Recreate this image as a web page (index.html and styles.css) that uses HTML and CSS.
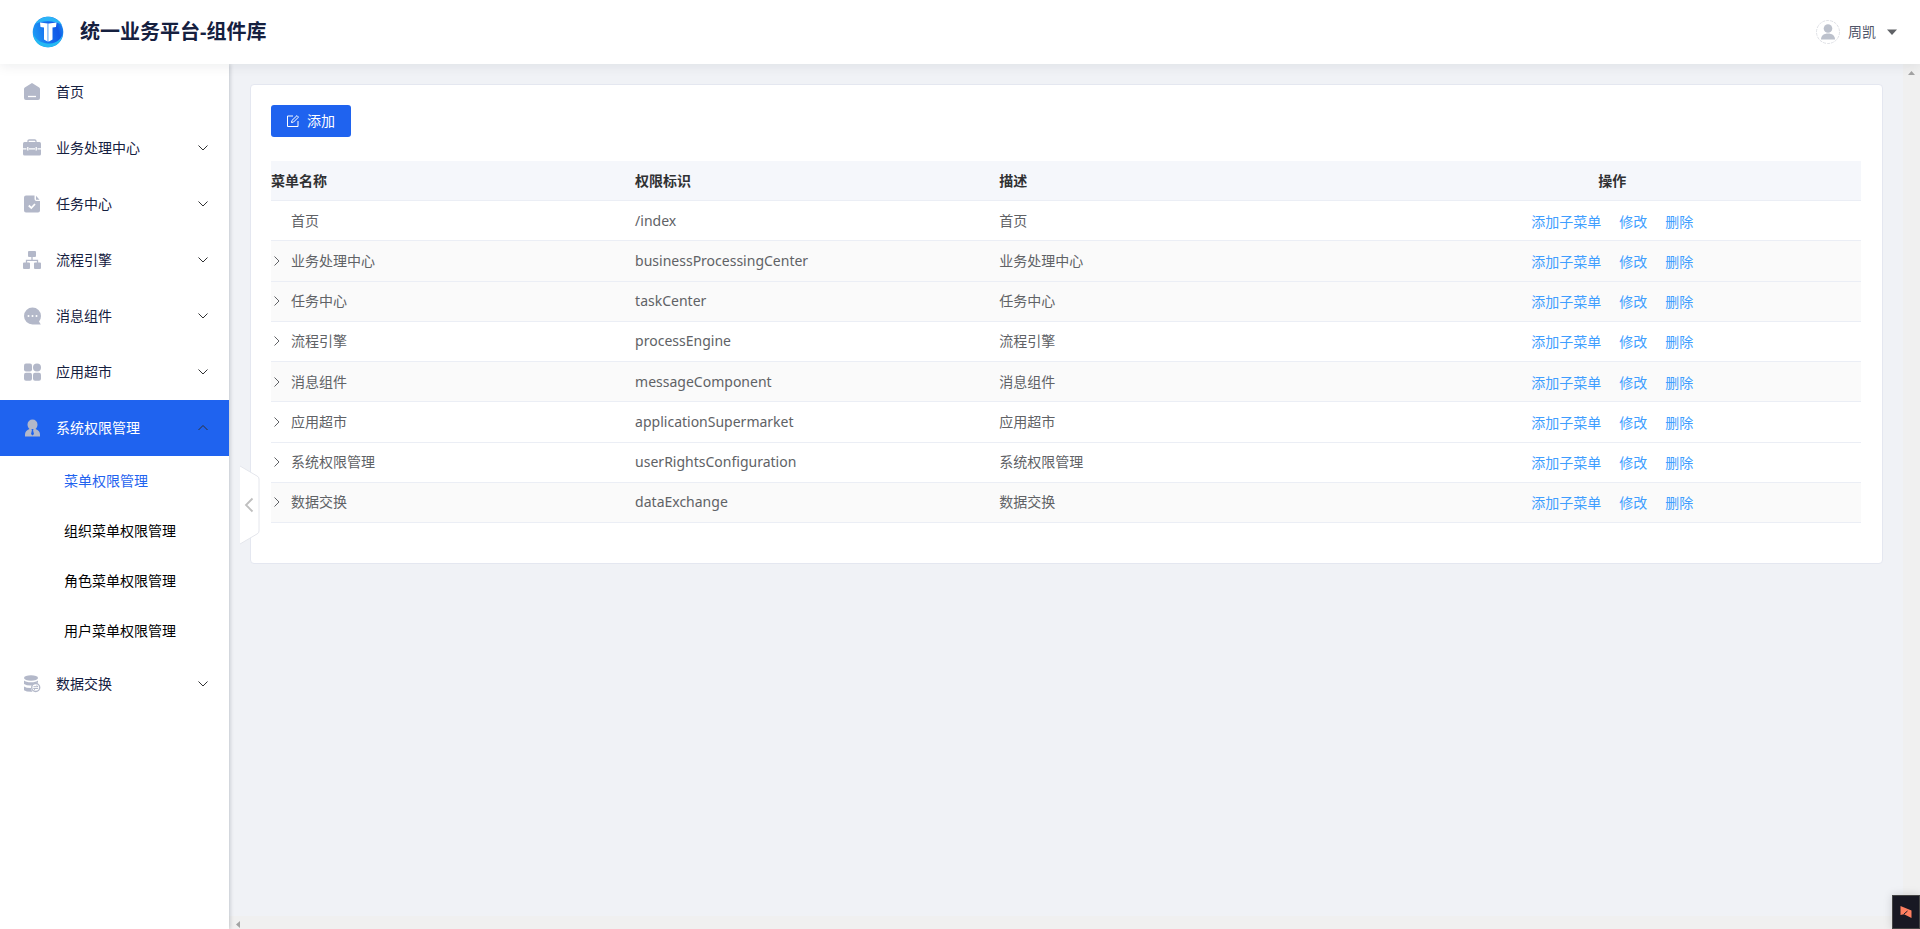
FILE: index.html
```html
<!DOCTYPE html>
<html lang="zh-CN">
<head>
<meta charset="utf-8">
<title>统一业务平台-组件库</title>
<link rel="stylesheet" href="styles.css">
</head>
<body>
<div class="app">
  <header class="topbar">
    <div class="brand">
      <svg class="logo" viewBox="0 0 32 32" aria-hidden="true">
        <defs>
          <linearGradient id="logoFill" x1="0" y1="0.6" x2="1" y2="0.3">
            <stop offset="0" stop-color="#1f9cf5"/>
            <stop offset="0.4" stop-color="#1673f0"/>
            <stop offset="0.8" stop-color="#1257e6"/>
            <stop offset="1" stop-color="#1a8cf2"/>
          </linearGradient>
        </defs>
        <circle cx="16" cy="16" r="15.3" fill="url(#logoFill)"/>
        <path d="M3 8C7 1.500 14 0 20 1.200 25 2.500 28 5 30 9 22 4.500 12 4 3 8z" fill="#2bb4f6"/>
        <path d="M1 18C5 25 10 27.500 18 27.500C25 27 29.500 23 31 17C30.500 26 24 31.300 16 31.300S2 26 1 18z" fill="#25b9f2"/>
        <path d="M8 6.500l7.500 1V25.500L12 23.500V11.500l-3.500-.500z" fill="#fff"/>
        <path d="M24.500 6.500l-7.500 1V25.500l3.500-2V11.500l3.500-.500z" fill="#fff"/>
        <path d="M15.500 7.500H17v18h-1.500z" fill="#b4d8fb"/>
      </svg>
      <h1 class="title">统一业务平台-组件库</h1>
    </div>
    <button class="user" type="button">
      <svg class="avatar" viewBox="0 0 24 24" aria-hidden="true">
        <circle cx="12" cy="12" r="11.500" fill="#fff" stroke="#dfe1e6" stroke-dasharray="3 1"/>
        <circle cx="12" cy="8.500" r="4.300" fill="#bcc1cc"/>
        <path d="M5 19.500c0-4 3-6 7-6s7 2 7 6z" fill="#bcc1cc"/>
      </svg>
      <span>周凯</span>
      <svg class="caret" viewBox="0 0 10 6" aria-hidden="true"><path d="M0 .500h10L5 6z" fill="#606266"/></svg>
    </button>
  </header>

  <div class="body">
    <nav class="sidebar">
      <a class="item" href="#">
        <svg class="icon" viewBox="0 0 18 18"><path d="M9 0l7.200 4.600q.800.500.800 1.500V15q0 2-2 2H3q-2 0-2-2V6.100q0-1 .800-1.500z"/><path class="cut" d="M5 13.500h8"/></svg>
        <span>首页</span>
      </a>
      <a class="item" href="#">
        <svg class="icon" viewBox="0 0 18 18"><path d="M5 3.500V2.300Q5 1 6.300 1h5.400Q13 1 13 2.300v1.200" fill="none" stroke="#b3b8c9" stroke-width="1.300"/><path d="M1.500 3h15Q18 3 18 4.500V15q0 1.500-1.500 1.500h-15Q0 16.500 0 15V4.500Q0 3 1.500 3z"/><path class="cut" d="M0 9.800h3.500M6 9.800h6M14.500 9.800H18M4.800 8v3.500M13.200 8v3.500"/></svg>
        <span>业务处理中心</span>
        <svg class="chev" viewBox="0 0 10 6"><path d="M.500.500L5 5 9.500.500"/></svg>
      </a>
      <a class="item" href="#">
        <svg class="icon" viewBox="0 0 18 18"><path d="M3 .500h8.500V4Q11.500 6 13.500 6H17v9.500q0 2-2 2H3q-2 0-2-2v-13q0-2 2-2zM13 .800L16.500 4.800H13z"/><path d="M5.800 10.500L8.300 13 12 9" fill="none" stroke="#fff" stroke-width="1.800"/></svg>
        <span>任务中心</span>
        <svg class="chev" viewBox="0 0 10 6"><path d="M.500.500L5 5 9.500.500"/></svg>
      </a>
      <a class="item" href="#">
        <svg class="icon" viewBox="0 0 18 18"><path d="M6 0h6q1 0 1 1v4q0 1-1 1H6Q5 6 5 5V1q0-1 1-1zM1 11.500h5q1 0 1 1V17q0 1-1 1H1q-1 0-1-1v-4.500q0-1 1-1zM12 11.500h5q1 0 1 1V17q0 1-1 1h-5q-1 0-1-1v-4.500q0-1 1-1z"/><path d="M9 6v3.300M3.500 12V9.300h11V12" fill="none" stroke="#b3b8c9" stroke-width="1.300"/></svg>
        <span>流程引擎</span>
        <svg class="chev" viewBox="0 0 10 6"><path d="M.500.500L5 5 9.500.500"/></svg>
      </a>
      <a class="item" href="#">
        <svg class="icon" viewBox="0 0 18 18"><path d="M9.500.500A8.500 8.500 0 0 1 18 9q0 3.500-2 5.500l1.800 3H9.500a8.500 8.500 0 0 1 0-17z"/><g fill="#fff"><circle cx="5.500" cy="9" r="1"/><circle cx="9.500" cy="9" r="1"/><circle cx="13.500" cy="9" r="1"/></g></svg>
        <span>消息组件</span>
        <svg class="chev" viewBox="0 0 10 6"><path d="M.500.500L5 5 9.500.500"/></svg>
      </a>
      <a class="item" href="#">
        <svg class="icon" viewBox="0 0 18 18"><rect x="1" y="0.500" width="8" height="8" rx="2"/><circle cx="14" cy="4.500" r="4"/><rect x="1" y="9.800" width="8" height="8" rx="2"/><rect x="10" y="9.800" width="8" height="8" rx="2"/></svg>
        <span>应用超市</span>
        <svg class="chev" viewBox="0 0 10 6"><path d="M.500.500L5 5 9.500.500"/></svg>
      </a>
      <a class="item active" href="#">
        <svg class="icon" viewBox="0 0 18 18"><path d="M9.500.500a5 5 0 0 1 5 5c0 2-1 3.500-2 4.500 3 1 4.500 3 4.500 5.500V17.500H2V15.500C2 13 3.500 11 6.500 10c-1-1-2-2.500-2-4.500a5 5 0 0 1 5-5z"/><path d="M8.500 10h2l-.400 1.500.900 3.500-1.500 1.500L8 15l.900-3.500z" fill="#1f63ef"/></svg>
        <span>系统权限管理</span>
        <svg class="chev" viewBox="0 0 10 6"><path d="M.500 5L5 .500 9.500 5"/></svg>
      </a>
      <div class="submenu">
        <a class="subitem current" href="#">菜单权限管理</a>
        <a class="subitem" href="#">组织菜单权限管理</a>
        <a class="subitem" href="#">角色菜单权限管理</a>
        <a class="subitem" href="#">用户菜单权限管理</a>
      </div>
      <a class="item" href="#">
        <svg class="icon" viewBox="0 0 18 18"><ellipse cx="8" cy="3" rx="7" ry="2.700"/><path d="M1 5.500q2 1.800 7 1.800t7-1.800v2.300q-4-.500-6 2.800-5.500.200-8-1.700zM1 11.500q2.500 1.600 7 1.500 0 2 1.500 3.800-6 .200-8.500-1.500z"/><circle cx="12.700" cy="12.500" r="4" fill="none" stroke="#b3b8c9" stroke-width="1.400"/><path d="M10.500 11.700h4.500l-1.500-1.300M15 13.500h-4.500l1.500 1.300" fill="none" stroke="#b3b8c9"/></svg>
        <span>数据交换</span>
        <svg class="chev" viewBox="0 0 10 6"><path d="M.500.500L5 5 9.500.500"/></svg>
      </a>
    </nav>

    <div class="viewport">
      <main class="content">
        <section class="card">
          <button class="add" type="button">
            <svg viewBox="0 0 12 12" aria-hidden="true"><path d="M6 1H.500v10.500H11V6M4.500 7.500l.400-2L10 .600l1.500 1.500-5 5z"/></svg>
            <span>添加</span>
          </button>
          <table class="grid">
            <colgroup><col class="c-name"><col class="c-key"><col class="c-desc"><col></colgroup>
            <thead>
              <tr><th>菜单名称</th><th>权限标识</th><th>描述</th><th class="ops">操作</th></tr>
            </thead>
            <tbody>
              <tr><td><div class="name leaf">首页</div></td><td>/index</td><td>首页</td><td class="ops"><div class="links"><button type="button">添加子菜单</button><button type="button">修改</button><button type="button">删除</button></div></td></tr>
              <tr class="shade"><td><div class="name"><svg viewBox="0 0 6 10"><path d="M.500.500L5 5 .500 9.500"/></svg>业务处理中心</div></td><td>businessProcessingCenter</td><td>业务处理中心</td><td class="ops"><div class="links"><button type="button">添加子菜单</button><button type="button">修改</button><button type="button">删除</button></div></td></tr>
              <tr class="shade"><td><div class="name"><svg viewBox="0 0 6 10"><path d="M.500.500L5 5 .500 9.500"/></svg>任务中心</div></td><td>taskCenter</td><td>任务中心</td><td class="ops"><div class="links"><button type="button">添加子菜单</button><button type="button">修改</button><button type="button">删除</button></div></td></tr>
              <tr><td><div class="name"><svg viewBox="0 0 6 10"><path d="M.500.500L5 5 .500 9.500"/></svg>流程引擎</div></td><td>processEngine</td><td>流程引擎</td><td class="ops"><div class="links"><button type="button">添加子菜单</button><button type="button">修改</button><button type="button">删除</button></div></td></tr>
              <tr class="shade"><td><div class="name"><svg viewBox="0 0 6 10"><path d="M.500.500L5 5 .500 9.500"/></svg>消息组件</div></td><td>messageComponent</td><td>消息组件</td><td class="ops"><div class="links"><button type="button">添加子菜单</button><button type="button">修改</button><button type="button">删除</button></div></td></tr>
              <tr><td><div class="name"><svg viewBox="0 0 6 10"><path d="M.500.500L5 5 .500 9.500"/></svg>应用超市</div></td><td>applicationSupermarket</td><td>应用超市</td><td class="ops"><div class="links"><button type="button">添加子菜单</button><button type="button">修改</button><button type="button">删除</button></div></td></tr>
              <tr><td><div class="name"><svg viewBox="0 0 6 10"><path d="M.500.500L5 5 .500 9.500"/></svg>系统权限管理</div></td><td>userRightsConfiguration</td><td>系统权限管理</td><td class="ops"><div class="links"><button type="button">添加子菜单</button><button type="button">修改</button><button type="button">删除</button></div></td></tr>
              <tr class="shade"><td><div class="name"><svg viewBox="0 0 6 10"><path d="M.500.500L5 5 .500 9.500"/></svg>数据交换</div></td><td>dataExchange</td><td>数据交换</td><td class="ops"><div class="links"><button type="button">添加子菜单</button><button type="button">修改</button><button type="button">删除</button></div></td></tr>
            </tbody>
          </table>
        </section>
      </main>
      <div class="track-v"><svg viewBox="0 0 7 4"><path d="M3.500 0L7 4H0z"/></svg></div>
      <div class="track-h"><svg viewBox="0 0 4 7"><path d="M0 3.500L4 0v7z"/></svg></div>
      <button class="collapse" type="button" aria-label="收起菜单">
        <svg viewBox="0 0 20 80"><path d="M0 1l17 10q2 1 2 3v52q0 2-2 3L0 79" fill="#fff" stroke="#e4e6ec"/><path d="M12.500 33.500L6 40l6.500 6.500" fill="none" stroke="#bfbfbf" stroke-width="1.800"/></svg>
      </button>
    </div>
  </div>

  <button class="widget" type="button" aria-label="工具">
    <svg viewBox="0 0 12 12"><path d="M.500 0L11.500 4.500V12L4 8.300.500 9z" fill="#ff7f60"/><path d="M4 8l3.500-3" stroke="#181823" fill="none"/></svg>
  </button>
</div>
</body>
</html>
```
FILE: styles.css
```css
* { box-sizing: border-box; }
body {
  margin: 0;
  font: 14px/20px "Noto Sans", "Noto Sans CJK SC", sans-serif;
  color: #606266;
}
button {
  font: inherit;
  color: inherit;
  background: none;
  border: 0;
  padding: 0;
  cursor: pointer;
}
a { text-decoration: none; color: inherit; }
svg { display: block; flex: none; }

.app { height: 100vh; display: flex; flex-direction: column; }

.topbar {
  flex: none;
  height: 64px;
  padding: 0 23px 0 32px;
  display: flex;
  align-items: center;
  justify-content: space-between;
  background: #fff;
  box-shadow: 0 2px 12px rgba(0, 21, 41, 0.08);
  position: relative;
  z-index: 2;
}
.brand { display: flex; align-items: center; gap: 16px; }
.logo { width: 32px; height: 32px; }
.title { margin: 0; font-size: 20px; line-height: 28px; font-weight: 700; color: #15203f; }
.user { display: flex; align-items: center; gap: 8px; color: #4f5468; }
.avatar { width: 24px; height: 24px; }
.caret { width: 10px; height: 6px; margin-left: 3px; }

.body { flex: 1; min-height: 0; display: flex; }

.sidebar {
  flex: none;
  width: 229px;
  background: #fff;
  box-shadow: 1px 0 4px rgba(0, 21, 41, 0.2);
  position: relative;
  z-index: 1;
}
.item {
  display: flex;
  align-items: center;
  height: 56px;
  padding: 0 21px 0 23px;
  color: #15203f;
}
.item span { flex: 1; margin-left: 15px; }
.icon { width: 18px; height: 18px; fill: #b3b8c9; }
.cut { fill: none; stroke: #fff; stroke-width: 1.3; }
.chev { width: 10px; height: 6px; fill: none; stroke: #303133; }
.item.active { background: #1f63ef; color: #fff; }
.subitem {
  display: flex;
  align-items: center;
  height: 50px;
  padding-left: 64px;
  color: #000;
}
.subitem.current { color: #1f63ef; }

.viewport {
  flex: 1;
  min-width: 0;
  display: grid;
  grid-template-columns: 1fr 17px;
  grid-template-rows: 1fr 13px;
  background: #f0f2f6;
  position: relative;
}
.content { padding: 20px 20px 20px 21px; min-width: 0; overflow: hidden; }
.track-v { background: #f0f0f0; padding: 7px 5px; }
.track-v svg { width: 7px; height: 4px; fill: #a3a3a3; }
.track-h { grid-column: 1 / 3; background: #f0f0f0; padding: 5px 7px; }
.track-h svg { width: 4px; height: 7px; fill: #a3a3a3; }

.card {
  background: #fff;
  border: 1px solid #e4e7f0;
  border-radius: 4px;
  padding: 20px 21px 40px 20px;
}
.add {
  display: flex;
  align-items: center;
  justify-content: center;
  gap: 8px;
  width: 80px;
  height: 32px;
  border-radius: 3px;
  background: #1f63ef;
  color: #fff;
}
.add svg { width: 12px; height: 12px; fill: none; stroke: #fff; }

.grid {
  width: 100%;
  height: 362px;
  margin-top: 24px;
  border-collapse: separate;
  border-spacing: 0;
  table-layout: fixed;
}
.c-name, .c-key, .c-desc { width: 22.9%; }
th, td {
  height: 40px;
  padding: 0;
  text-align: left;
  border-bottom: 1px solid #ebeef5;
}
th { background: #f5f7fb; color: #303133; font-weight: 700; }
.shade { background: #fafafa; }
.ops { text-align: center; }
.name { display: flex; align-items: center; }
.name svg { width: 6px; height: 10px; margin: 0 11px 0 3px; fill: none; stroke: #606266; }
.name.leaf { padding-left: 20px; }
.links { display: flex; justify-content: center; gap: 18px; padding-top: 2px; color: #409eff; }

.collapse { position: absolute; left: 11px; top: 401px; }
.collapse svg { width: 20px; height: 80px; }

.widget {
  position: fixed;
  right: 0;
  bottom: 0;
  z-index: 3;
  width: 28px;
  height: 34px;
  display: flex;
  align-items: center;
  justify-content: center;
  background: #181823;
  border: 1px solid #444;
  box-shadow: 0 0 10px rgba(0, 0, 0, 0.15);
}
.widget svg { width: 12px; height: 12px; }
```
